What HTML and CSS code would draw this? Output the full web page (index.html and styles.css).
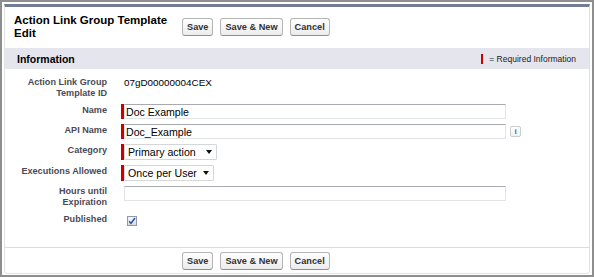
FILE: index.html
```html
<!DOCTYPE html>
<html lang="en">
<head>
<meta charset="utf-8">
<title>Action Link Group Template Edit</title>
<link rel="stylesheet" href="styles.css">
</head>
<body>
<div class="frame">
  <div class="panel">
    <div class="pb-head">
      <h2 class="pb-title">Action Link Group Template Edit</h2>
      <div class="pb-buttons">
        <button class="btn" type="button">Save</button>
        <button class="btn" type="button">Save &amp; New</button>
        <button class="btn" type="button">Cancel</button>
      </div>
    </div>
    <div class="section-head">
      <h3 class="section-title">Information</h3>
      <span class="legend"><span class="legend-bar"></span>= Required Information</span>
    </div>
    <div class="form">
      <div class="label">Action Link Group Template ID</div>
      <div class="data plain"><span class="value">07gD00000004CEX</span></div>

      <div class="label">Name</div>
      <div class="data"><span class="req"></span><input class="field" type="text" value="Doc Example"></div>

      <div class="label">API Name</div>
      <div class="data"><span class="req"></span><input class="field" type="text" value="Doc_Example"><span class="info">i</span></div>

      <div class="label">Category</div>
      <div class="data"><span class="req req-sel"></span><div class="select select-cat"><span>Primary action</span><svg class="arrow" width="6" height="4" viewBox="0 0 6 4"><path d="M0 0H6L3 4Z" fill="#111"/></svg></div></div>

      <div class="label">Executions Allowed</div>
      <div class="data"><span class="req req-sel"></span><div class="select select-exec"><span>Once per User</span><svg class="arrow" width="6" height="4" viewBox="0 0 6 4"><path d="M0 0H6L3 4Z" fill="#111"/></svg></div></div>

      <div class="label label-tight">Hours until Expiration</div>
      <div class="data plain"><input class="field" type="text" value=""></div>

      <div class="label">Published</div>
      <div class="data plain"><span class="check"><svg width="8" height="8" viewBox="0 0 8 8"><path d="M1.2 4.2L3 6.4L7 1" fill="none" stroke="#2a4fa8" stroke-width="1.5"/></svg></span></div>
    </div>
    <div class="pb-foot">
      <div class="pb-buttons">
        <button class="btn" type="button">Save</button>
        <button class="btn" type="button">Save &amp; New</button>
        <button class="btn" type="button">Cancel</button>
      </div>
    </div>
  </div>
</div>
</body>
</html>
```

FILE: styles.css
```css
* { box-sizing: border-box; }
html, body { margin: 0; padding: 0; background: #fff; }
body { font-family: "Liberation Sans", Arial, sans-serif; color: #000; }

.frame {
  width: 594px;
  height: 277px;
  border: 2px solid #8e8e8e;
  padding: 2px 2px 1px 2px;
  background: #fff;
}

.panel {
  height: 100%;
  border: 1px solid #e0e3e5;
  border-top: 3px solid #757c96;
  border-radius: 0 0 4px 4px;
  display: flex;
  flex-direction: column;
}

.pb-head {
  display: flex;
  align-items: center;
  padding: 7px 0 8px 9px;
}
.pb-title {
  margin: 0;
  width: 168px;
  font-size: 11.5px;
  line-height: 13px;
  font-weight: bold;
  color: #000;
}
.pb-buttons {
  display: flex;
  gap: 7px;
}
.btn {
  height: 18px;
  padding: 0 4px;
  font-family: "Liberation Sans", Arial, sans-serif;
  font-size: 9.2px;
  font-weight: bold;
  color: #333;
  background: linear-gradient(#ffffff, #ececec);
  border: 1px solid #b5b5b5;
  border-bottom-color: #8f8f8f;
  border-radius: 3px;
}

.section-head {
  height: 21px;
  background: #e4e5ed;
  display: flex;
  align-items: center;
  justify-content: space-between;
  padding: 0 13px 0 12px;
}
.section-title {
  margin: 0;
  font-size: 10.5px;
  font-weight: bold;
  color: #000;
}
.legend {
  display: flex;
  align-items: center;
  font-size: 8.5px;
  color: #222;
}
.legend-bar {
  width: 2px;
  height: 10px;
  background: #c00;
  margin-right: 6px;
}

.form {
  flex: 1;
  display: grid;
  grid-template-columns: 90px 1fr;
  column-gap: 14px;
  row-gap: 5px;
  align-items: start;
  align-content: start;
  padding: 7px 0 0 12px;
}
.label {
  font-size: 9.1px;
  line-height: 11px;
  font-weight: bold;
  color: #4a4a56;
  text-align: right;
  padding-top: 1px;
}
.label-tight { padding-top: 0; }
.data {
  display: flex;
  align-items: center;
}
.data.plain { padding-left: 3px; }
.value {
  font-size: 9.9px;
  line-height: 11px;
  padding-top: 1px;
}
.req {
  width: 3px;
  height: 15px;
  background: #c00;
  flex: none;
}
.req-sel { height: 16px; }
.field {
  width: 382px;
  height: 15px;
  margin: 0;
  padding: 0 1px;
  font-family: "Liberation Sans", Arial, sans-serif;
  font-size: 10.6px;
  color: #000;
  border: 1px solid #e0e4e7;
  border-top-color: #a9a9b1;
  border-radius: 0;
  background: #fff;
  outline: none;
}
.info {
  width: 11px;
  height: 11px;
  margin-left: 4px;
  border: 1px solid #c9ccd0;
  border-radius: 2px;
  background: linear-gradient(#ffffff, #eef0f2);
  color: #1f6fd6;
  font-size: 8px;
  font-weight: bold;
  line-height: 9px;
  text-align: center;
}
.select {
  height: 16px;
  display: flex;
  align-items: center;
  justify-content: space-between;
  padding: 0 4px 0 3px;
  border: 1px solid #d4d7da;
  border-radius: 1px;
  background: #fff;
  font-size: 10.6px;
  color: #000;
}
.select-cat { width: 93px; }
.select-exec { width: 90px; }
.arrow { flex: none; }
.check {
  width: 10px;
  height: 10px;
  margin-top: 3px;
  margin-left: 3px;
  border: 1px solid #8e98a6;
  background: linear-gradient(#f3f5f8, #d8dde4);
  display: flex;
  align-items: center;
  justify-content: center;
}

.pb-foot {
  border-top: 1px solid #dcdcdc;
  padding: 4px 0 3px 177px;
}
```
